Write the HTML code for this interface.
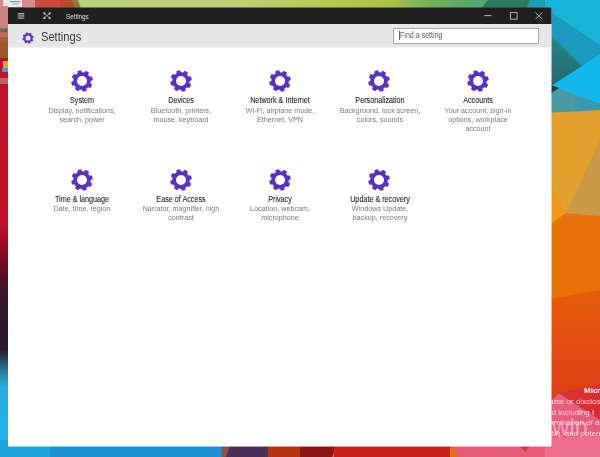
<!DOCTYPE html>
<html><head><meta charset="utf-8"><style>
html,body{margin:0;padding:0;width:600px;height:457px;overflow:hidden;position:relative;font-family:"Liberation Sans",sans-serif;background:#e07010}
#bg{position:absolute;left:0;top:0}
#win{position:absolute;left:8px;top:8px;width:543px;height:438px;background:#fff;overflow:hidden}
#tb{position:absolute;left:0;top:0;width:543px;height:16px;background:#1f1f1f}
#hd{position:absolute;left:0;top:16px;width:543px;height:23px;background:#e7e7e7;border-bottom:1px solid #f3f3f3}
.ttl{position:absolute;color:#e0e0e0;font-size:6.3px;left:58px;top:4.5px;white-space:nowrap}
.hdt{position:absolute;color:#383838;font-size:12.8px;line-height:14px;left:32.5px;top:6px;white-space:nowrap;transform:scaleX(0.87);transform-origin:0 0}
#search{position:absolute;left:385px;top:4px;width:144px;height:14px;border:1px solid #a8a8a8;background:#fff}
#search span{position:absolute;left:5.5px;top:1px;font-size:8.7px;color:#5c5c5c;white-space:nowrap;transform:scaleX(0.815);transform-origin:0 0}
#search i{position:absolute;left:4.5px;top:2px;width:1px;height:9px;background:#606060}
.item{position:absolute;width:96px;text-align:center;white-space:nowrap}
.g{position:absolute}
.item .t{position:absolute;left:0;width:96px;top:26.2px;font-size:8.4px;line-height:9px;color:#1e1e1e;font-weight:normal;-webkit-text-stroke:0.1px #1e1e1e;transform:scaleX(0.86)}
.item .d{position:absolute;left:0;width:96px;top:35.5px;font-size:7.3px;line-height:9.4px;color:#787878;transform:scaleX(0.985)}
</style></head><body><div id="root" style="position:absolute;left:0;top:0;width:600px;height:457px;filter:blur(0.3px)">
<svg id="bg" width="600" height="457" viewBox="0 0 600 457">
  <!-- top strip -->
  <defs><linearGradient id="tg" x1="0" x2="600" y1="0" y2="0" gradientUnits="userSpaceOnUse">
    <stop offset="0.13" stop-color="#bad27c"/><stop offset="0.38" stop-color="#bcd27a"/><stop offset="0.55" stop-color="#b4ca52"/>
    <stop offset="0.655" stop-color="#a6c244"/><stop offset="0.69" stop-color="#82b656"/><stop offset="0.77" stop-color="#5eaa64"/><stop offset="0.8" stop-color="#52a674"/>
  </linearGradient></defs>
  <rect x="0" y="0" width="600" height="12" fill="url(#tg)"/>
  <rect x="0" y="0" width="35" height="12" fill="#d98c8c"/>
  <rect x="35" y="0" width="30" height="12" fill="#cc4c3c"/>
  <polygon points="60,0 77,0 80,12 60,12" fill="#b84c30"/>
  <polygon points="72,0 78,0 82,12 76,12" fill="#8c7a36"/>
  <polygon points="488,0 530,0 525,12 478,12" fill="#2a7c5c"/>
  <polygon points="530,0 551,0 551,12 525,12" fill="#1e9cb6"/>
  <rect x="3" y="0" width="5" height="6" fill="#efe8e8"/>
  <rect x="8" y="0" width="14" height="7" fill="#e4e8ec"/>
  <rect x="10" y="1" width="10" height="1.2" fill="#8a96a2"/>
  <rect x="12" y="3.5" width="7" height="1" fill="#a0aab8"/>
  <!-- left strip -->
  <rect x="0" y="7" width="10" height="30" fill="#cf8282"/>
  <rect x="0" y="28" width="8" height="5" fill="#9a7070"/>
  <rect x="1" y="29" width="2" height="3" fill="#6a5858"/>
  <rect x="4" y="29" width="3" height="3" fill="#6a5858"/>
  <rect x="0" y="33" width="10" height="4" fill="#c46a5e"/>
  <rect x="0" y="37" width="10" height="21" fill="#9c5a2e"/>
  <rect x="0" y="37" width="10" height="6" fill="#a85e34"/>
  <rect x="0" y="58" width="10" height="172" fill="#c21228"/>
  <rect x="3" y="61" width="5" height="7" fill="#e8a028"/>
  <rect x="2" y="68" width="6" height="4" fill="#38a0dc"/>
  <rect x="0" y="78" width="8" height="6" fill="#b86870"/>
  <defs><linearGradient id="lg" x1="0" x2="0" y1="90" y2="457" gradientUnits="userSpaceOnUse">
    <stop offset="0" stop-color="#c21228"/><stop offset="0.37" stop-color="#bc1028"/><stop offset="0.436" stop-color="#900a26"/>
    <stop offset="0.504" stop-color="#5a0e26"/><stop offset="0.572" stop-color="#34162a"/><stop offset="0.708" stop-color="#2a1a2c"/>
    <stop offset="0.741" stop-color="#2a5070"/><stop offset="0.777" stop-color="#2a8aac"/><stop offset="0.812" stop-color="#26b0e2"/><stop offset="1" stop-color="#22b6ea"/>
  </linearGradient></defs>
  <rect x="0" y="90" width="10" height="367" fill="url(#lg)"/>
  <!-- bottom strip -->
  <rect x="0" y="440" width="222" height="17" fill="#1a90d2"/>
  <rect x="0" y="440" width="50" height="17" fill="#1ea2dc"/>
  <rect x="222" y="440" width="46" height="17" fill="#4a3058"/>
  <polygon points="222,440 232,440 226,457 222,457" fill="#8a5040"/>
  <rect x="268" y="440" width="32" height="17" fill="#b43210"/>
  <polygon points="300,440 340,440 332,457 300,457" fill="#8c1614"/>
  <rect x="334" y="440" width="116" height="17" fill="#c82018"/>
  <polygon points="450,440 551,440 551,457 458,457" fill="#e85c7a"/>
  <polygon points="515,440 535,440 525,452" fill="#d03848"/>
  <!-- right strip -->
  <rect x="545" y="0" width="55" height="112" fill="#1ab6da"/>
  <polygon points="545,8 600,45 600,104 545,100" fill="#1a9abe"/>
  <defs><linearGradient id="gt" x1="0" x2="0" y1="30" y2="90" gradientUnits="userSpaceOnUse"><stop offset="0" stop-color="#2a8a90"/><stop offset="1" stop-color="#22666a"/></linearGradient></defs>
  <polygon points="545,30 582,66 545,90" fill="url(#gt)"/>
  <polygon points="545,90 582,66 600,54 600,104 557,88" fill="#12b8ee"/>
  <polygon points="545,90 557,88 600,104 600,112 545,114" fill="#4a9aa4"/>
  <polygon points="575,96 600,104 600,112 575,112" fill="#3c96b0"/>
  <polygon points="545,83 559,88 545,97" fill="#26382f"/>
  <polygon points="545,113 600,110 600,230 545,230" fill="#e2a02c"/>
  <polygon points="600,140 566,213 600,216" fill="#c89a48"/>
  <polygon points="545,172 566,213 545,228" fill="#ee9818"/>
  <polygon points="545,228 566,213 600,216 600,290 545,300" fill="#e8720a"/>
  <defs><linearGradient id="og" x1="0" x2="0" y1="290" y2="420" gradientUnits="userSpaceOnUse"><stop offset="0" stop-color="#e45e08"/><stop offset="0.45" stop-color="#e14c12"/><stop offset="1" stop-color="#dc381c"/></linearGradient></defs>
  <polygon points="545,300 600,290 600,457 545,457" fill="url(#og)"/>
  <polygon points="559,393.5 600,384 600,420" fill="#d83034"/>
  <polygon points="545,407 559,393.5 600,420 600,457 545,457" fill="#e55e7e"/>
  <polygon points="545,438 600,436 600,457 545,457" fill="#ee6c8c"/>
</svg>

<div id="dtxt" style="position:absolute;left:0;top:0;width:600px;height:457px;overflow:hidden;color:rgba(255,240,240,0.85);font-size:8px;line-height:10px;white-space:nowrap">
  <span style="position:absolute;left:584px;top:385.5px;font-weight:bold;color:#fff">Micr</span>
  <span style="position:absolute;left:551.5px;top:396.5px">use or disclos</span>
  <span style="position:absolute;left:551.5px;top:408px">d including t</span>
  <span style="position:absolute;left:551px;top:418px">rmination of a</span>
  <span style="position:absolute;left:551px;top:429px">M), and poten</span>
  <span style="position:absolute;left:552px;top:413px;font-size:24px;line-height:28px;color:rgba(255,225,235,0.55)">win</span>
</div>
<div id="win">
  <div id="tb">
    <svg width="543" height="16" viewBox="0 1 543 16" style="position:absolute;left:0;top:0">
      <g fill="#a8a8a8"><rect x="9.8" y="6.1" width="6.4" height="1.3" fill="#c4c4c4"/><rect x="9.8" y="8.3" width="6.4" height="1.3"/><rect x="9.8" y="10.5" width="6.4" height="1.3"/></g>
      <g stroke="#b4b4b4" stroke-width="0.8" fill="none"><path d="M35.9 5.999999999999999 L42.1 11.4 M42.1 5.999999999999999 L35.9 11.4"/></g><g fill="#d8d8d8"><path d="M35.10 5.30L37.90 5.89L36.06 8.00ZM35.10 12.10L36.06 9.40L37.90 11.51ZM42.90 5.30L41.94 8.00L40.10 5.89ZM42.90 12.10L40.10 11.51L41.94 9.40Z"/></g>
      <g stroke="#c4c4c4" stroke-width="0.9" fill="none"><path d="M476.2 8.6 H483.5"/><rect x="502.5" y="5.6" width="6.6" height="6.6"/><path d="M527.6 5.5 L534.2 12.1 M534.2 5.5 L527.6 12.1"/></g>
    </svg>
    <span class="ttl">Settings</span>
  </div>
  <div id="hd">
    <svg width="12" height="12" viewBox="-11.5 -11.5 23 23" style="position:absolute;left:13.7px;top:7.5px"><path fill="#5830c6" fill-rule="evenodd" d="M-4.42 -7.50L-4.52 -9.92L-1.04 -10.85L0.08 -8.70A8.7 8.7 0 0 1 2.18 -8.42L3.82 -10.21L6.93 -8.41L6.21 -6.10A8.7 8.7 0 0 1 7.50 -4.42L9.92 -4.52L10.85 -1.04L8.70 0.08A8.7 8.7 0 0 1 8.42 2.18L10.21 3.82L8.41 6.93L6.10 6.21A8.7 8.7 0 0 1 4.42 7.50L4.52 9.92L1.04 10.85L-0.08 8.70A8.7 8.7 0 0 1 -2.18 8.42L-3.82 10.21L-6.93 8.41L-6.21 6.10A8.7 8.7 0 0 1 -7.50 4.42L-9.92 4.52L-10.85 1.04L-8.70 -0.08A8.7 8.7 0 0 1 -8.42 -2.18L-10.21 -3.82L-8.41 -6.93L-6.10 -6.21A8.7 8.7 0 0 1 -4.42 -7.50ZM5.0 0A5.0 5.0 0 1 0 -5.0 0A5.0 5.0 0 1 0 5.0 0Z"/></svg>
    <span class="hdt">Settings</span>
    <div id="search"><i></i><span>Find a setting</span></div>
  </div>
</div>

<div style="position:absolute;left:8px;top:7px;width:543px;height:1px;background:rgba(31,31,31,0.5)"></div>
<div style="position:absolute;left:8px;top:446px;width:543px;height:1px;background:rgba(255,255,255,0.55)"></div>
<div style="position:absolute;left:551px;top:8px;width:1px;height:438px;background:rgba(255,255,255,0.5)"></div>
<div style="position:absolute;left:551px;top:8px;width:1px;height:16px;background:rgba(31,31,31,0.5)"></div>
<div id="grid">
<svg class="g" width="24" height="22" viewBox="-12 -11 24 22" style="left:70px;top:70px"><path fill="#5830c6" fill-rule="evenodd" d="M-4.42 -7.50L-4.52 -9.92L-1.04 -10.85L0.08 -8.70A8.7 8.7 0 0 1 2.18 -8.42L3.82 -10.21L6.93 -8.41L6.21 -6.10A8.7 8.7 0 0 1 7.50 -4.42L9.92 -4.52L10.85 -1.04L8.70 0.08A8.7 8.7 0 0 1 8.42 2.18L10.21 3.82L8.41 6.93L6.10 6.21A8.7 8.7 0 0 1 4.42 7.50L4.52 9.92L1.04 10.85L-0.08 8.70A8.7 8.7 0 0 1 -2.18 8.42L-3.82 10.21L-6.93 8.41L-6.21 6.10A8.7 8.7 0 0 1 -7.50 4.42L-9.92 4.52L-10.85 1.04L-8.70 -0.08A8.7 8.7 0 0 1 -8.42 -2.18L-10.21 -3.82L-8.41 -6.93L-6.10 -6.21A8.7 8.7 0 0 1 -4.42 -7.50ZM5.0 0A5.0 5.0 0 1 0 -5.0 0A5.0 5.0 0 1 0 5.0 0Z"/></svg><div class="item" style="left:34.2px;top:70.0px"><div class="t">System</div><div class="d">Display, notifications,<br>search, power</div></div>
<svg class="g" width="24" height="22" viewBox="-12 -11 24 22" style="left:169px;top:70px"><path fill="#5830c6" fill-rule="evenodd" d="M-4.42 -7.50L-4.52 -9.92L-1.04 -10.85L0.08 -8.70A8.7 8.7 0 0 1 2.18 -8.42L3.82 -10.21L6.93 -8.41L6.21 -6.10A8.7 8.7 0 0 1 7.50 -4.42L9.92 -4.52L10.85 -1.04L8.70 0.08A8.7 8.7 0 0 1 8.42 2.18L10.21 3.82L8.41 6.93L6.10 6.21A8.7 8.7 0 0 1 4.42 7.50L4.52 9.92L1.04 10.85L-0.08 8.70A8.7 8.7 0 0 1 -2.18 8.42L-3.82 10.21L-6.93 8.41L-6.21 6.10A8.7 8.7 0 0 1 -7.50 4.42L-9.92 4.52L-10.85 1.04L-8.70 -0.08A8.7 8.7 0 0 1 -8.42 -2.18L-10.21 -3.82L-8.41 -6.93L-6.10 -6.21A8.7 8.7 0 0 1 -4.42 -7.50ZM5.0 0A5.0 5.0 0 1 0 -5.0 0A5.0 5.0 0 1 0 5.0 0Z"/></svg><div class="item" style="left:133.3px;top:70.0px"><div class="t">Devices</div><div class="d">Bluetooth, printers,<br>mouse, keyboard</div></div>
<svg class="g" width="24" height="22" viewBox="-12 -11 24 22" style="left:268px;top:70px"><path fill="#5830c6" fill-rule="evenodd" d="M-4.42 -7.50L-4.52 -9.92L-1.04 -10.85L0.08 -8.70A8.7 8.7 0 0 1 2.18 -8.42L3.82 -10.21L6.93 -8.41L6.21 -6.10A8.7 8.7 0 0 1 7.50 -4.42L9.92 -4.52L10.85 -1.04L8.70 0.08A8.7 8.7 0 0 1 8.42 2.18L10.21 3.82L8.41 6.93L6.10 6.21A8.7 8.7 0 0 1 4.42 7.50L4.52 9.92L1.04 10.85L-0.08 8.70A8.7 8.7 0 0 1 -2.18 8.42L-3.82 10.21L-6.93 8.41L-6.21 6.10A8.7 8.7 0 0 1 -7.50 4.42L-9.92 4.52L-10.85 1.04L-8.70 -0.08A8.7 8.7 0 0 1 -8.42 -2.18L-10.21 -3.82L-8.41 -6.93L-6.10 -6.21A8.7 8.7 0 0 1 -4.42 -7.50ZM5.0 0A5.0 5.0 0 1 0 -5.0 0A5.0 5.0 0 1 0 5.0 0Z"/></svg><div class="item" style="left:232.4px;top:70.0px"><div class="t">Network &amp; Internet</div><div class="d">Wi-Fi, airplane mode,<br>Ethernet, VPN</div></div>
<svg class="g" width="24" height="22" viewBox="-12 -11 24 22" style="left:367px;top:70px"><path fill="#5830c6" fill-rule="evenodd" d="M-4.42 -7.50L-4.52 -9.92L-1.04 -10.85L0.08 -8.70A8.7 8.7 0 0 1 2.18 -8.42L3.82 -10.21L6.93 -8.41L6.21 -6.10A8.7 8.7 0 0 1 7.50 -4.42L9.92 -4.52L10.85 -1.04L8.70 0.08A8.7 8.7 0 0 1 8.42 2.18L10.21 3.82L8.41 6.93L6.10 6.21A8.7 8.7 0 0 1 4.42 7.50L4.52 9.92L1.04 10.85L-0.08 8.70A8.7 8.7 0 0 1 -2.18 8.42L-3.82 10.21L-6.93 8.41L-6.21 6.10A8.7 8.7 0 0 1 -7.50 4.42L-9.92 4.52L-10.85 1.04L-8.70 -0.08A8.7 8.7 0 0 1 -8.42 -2.18L-10.21 -3.82L-8.41 -6.93L-6.10 -6.21A8.7 8.7 0 0 1 -4.42 -7.50ZM5.0 0A5.0 5.0 0 1 0 -5.0 0A5.0 5.0 0 1 0 5.0 0Z"/></svg><div class="item" style="left:331.5px;top:70.0px"><div class="t">Personalization</div><div class="d">Background, lock screen,<br>colors, sounds</div></div>
<svg class="g" width="24" height="22" viewBox="-12 -11 24 22" style="left:466px;top:70px"><path fill="#5830c6" fill-rule="evenodd" d="M-4.42 -7.50L-4.52 -9.92L-1.04 -10.85L0.08 -8.70A8.7 8.7 0 0 1 2.18 -8.42L3.82 -10.21L6.93 -8.41L6.21 -6.10A8.7 8.7 0 0 1 7.50 -4.42L9.92 -4.52L10.85 -1.04L8.70 0.08A8.7 8.7 0 0 1 8.42 2.18L10.21 3.82L8.41 6.93L6.10 6.21A8.7 8.7 0 0 1 4.42 7.50L4.52 9.92L1.04 10.85L-0.08 8.70A8.7 8.7 0 0 1 -2.18 8.42L-3.82 10.21L-6.93 8.41L-6.21 6.10A8.7 8.7 0 0 1 -7.50 4.42L-9.92 4.52L-10.85 1.04L-8.70 -0.08A8.7 8.7 0 0 1 -8.42 -2.18L-10.21 -3.82L-8.41 -6.93L-6.10 -6.21A8.7 8.7 0 0 1 -4.42 -7.50ZM5.0 0A5.0 5.0 0 1 0 -5.0 0A5.0 5.0 0 1 0 5.0 0Z"/></svg><div class="item" style="left:430.4px;top:70.0px"><div class="t">Accounts</div><div class="d">Your account, sign-in<br>options, workplace<br>account</div></div>
<svg class="g" width="24" height="22" viewBox="-12 -11 24 22" style="left:70px;top:169px"><path fill="#5830c6" fill-rule="evenodd" d="M-4.42 -7.50L-4.52 -9.92L-1.04 -10.85L0.08 -8.70A8.7 8.7 0 0 1 2.18 -8.42L3.82 -10.21L6.93 -8.41L6.21 -6.10A8.7 8.7 0 0 1 7.50 -4.42L9.92 -4.52L10.85 -1.04L8.70 0.08A8.7 8.7 0 0 1 8.42 2.18L10.21 3.82L8.41 6.93L6.10 6.21A8.7 8.7 0 0 1 4.42 7.50L4.52 9.92L1.04 10.85L-0.08 8.70A8.7 8.7 0 0 1 -2.18 8.42L-3.82 10.21L-6.93 8.41L-6.21 6.10A8.7 8.7 0 0 1 -7.50 4.42L-9.92 4.52L-10.85 1.04L-8.70 -0.08A8.7 8.7 0 0 1 -8.42 -2.18L-10.21 -3.82L-8.41 -6.93L-6.10 -6.21A8.7 8.7 0 0 1 -4.42 -7.50ZM5.0 0A5.0 5.0 0 1 0 -5.0 0A5.0 5.0 0 1 0 5.0 0Z"/></svg><div class="item" style="left:34.2px;top:168.4px"><div class="t">Time &amp; language</div><div class="d">Date, time, region</div></div>
<svg class="g" width="24" height="22" viewBox="-12 -11 24 22" style="left:169px;top:169px"><path fill="#5830c6" fill-rule="evenodd" d="M-4.42 -7.50L-4.52 -9.92L-1.04 -10.85L0.08 -8.70A8.7 8.7 0 0 1 2.18 -8.42L3.82 -10.21L6.93 -8.41L6.21 -6.10A8.7 8.7 0 0 1 7.50 -4.42L9.92 -4.52L10.85 -1.04L8.70 0.08A8.7 8.7 0 0 1 8.42 2.18L10.21 3.82L8.41 6.93L6.10 6.21A8.7 8.7 0 0 1 4.42 7.50L4.52 9.92L1.04 10.85L-0.08 8.70A8.7 8.7 0 0 1 -2.18 8.42L-3.82 10.21L-6.93 8.41L-6.21 6.10A8.7 8.7 0 0 1 -7.50 4.42L-9.92 4.52L-10.85 1.04L-8.70 -0.08A8.7 8.7 0 0 1 -8.42 -2.18L-10.21 -3.82L-8.41 -6.93L-6.10 -6.21A8.7 8.7 0 0 1 -4.42 -7.50ZM5.0 0A5.0 5.0 0 1 0 -5.0 0A5.0 5.0 0 1 0 5.0 0Z"/></svg><div class="item" style="left:133.3px;top:168.4px"><div class="t">Ease of Access</div><div class="d">Narrator, magnifier, high<br>contrast</div></div>
<svg class="g" width="24" height="22" viewBox="-12 -11 24 22" style="left:268px;top:169px"><path fill="#5830c6" fill-rule="evenodd" d="M-4.42 -7.50L-4.52 -9.92L-1.04 -10.85L0.08 -8.70A8.7 8.7 0 0 1 2.18 -8.42L3.82 -10.21L6.93 -8.41L6.21 -6.10A8.7 8.7 0 0 1 7.50 -4.42L9.92 -4.52L10.85 -1.04L8.70 0.08A8.7 8.7 0 0 1 8.42 2.18L10.21 3.82L8.41 6.93L6.10 6.21A8.7 8.7 0 0 1 4.42 7.50L4.52 9.92L1.04 10.85L-0.08 8.70A8.7 8.7 0 0 1 -2.18 8.42L-3.82 10.21L-6.93 8.41L-6.21 6.10A8.7 8.7 0 0 1 -7.50 4.42L-9.92 4.52L-10.85 1.04L-8.70 -0.08A8.7 8.7 0 0 1 -8.42 -2.18L-10.21 -3.82L-8.41 -6.93L-6.10 -6.21A8.7 8.7 0 0 1 -4.42 -7.50ZM5.0 0A5.0 5.0 0 1 0 -5.0 0A5.0 5.0 0 1 0 5.0 0Z"/></svg><div class="item" style="left:232.4px;top:168.4px"><div class="t">Privacy</div><div class="d">Location, webcam,<br>microphone</div></div>
<svg class="g" width="24" height="22" viewBox="-12 -11 24 22" style="left:367px;top:169px"><path fill="#5830c6" fill-rule="evenodd" d="M-4.42 -7.50L-4.52 -9.92L-1.04 -10.85L0.08 -8.70A8.7 8.7 0 0 1 2.18 -8.42L3.82 -10.21L6.93 -8.41L6.21 -6.10A8.7 8.7 0 0 1 7.50 -4.42L9.92 -4.52L10.85 -1.04L8.70 0.08A8.7 8.7 0 0 1 8.42 2.18L10.21 3.82L8.41 6.93L6.10 6.21A8.7 8.7 0 0 1 4.42 7.50L4.52 9.92L1.04 10.85L-0.08 8.70A8.7 8.7 0 0 1 -2.18 8.42L-3.82 10.21L-6.93 8.41L-6.21 6.10A8.7 8.7 0 0 1 -7.50 4.42L-9.92 4.52L-10.85 1.04L-8.70 -0.08A8.7 8.7 0 0 1 -8.42 -2.18L-10.21 -3.82L-8.41 -6.93L-6.10 -6.21A8.7 8.7 0 0 1 -4.42 -7.50ZM5.0 0A5.0 5.0 0 1 0 -5.0 0A5.0 5.0 0 1 0 5.0 0Z"/></svg><div class="item" style="left:331.5px;top:168.4px"><div class="t">Update &amp; recovery</div><div class="d">Windows Update,<br>backup, recovery</div></div>
</div>


</div></body></html>
